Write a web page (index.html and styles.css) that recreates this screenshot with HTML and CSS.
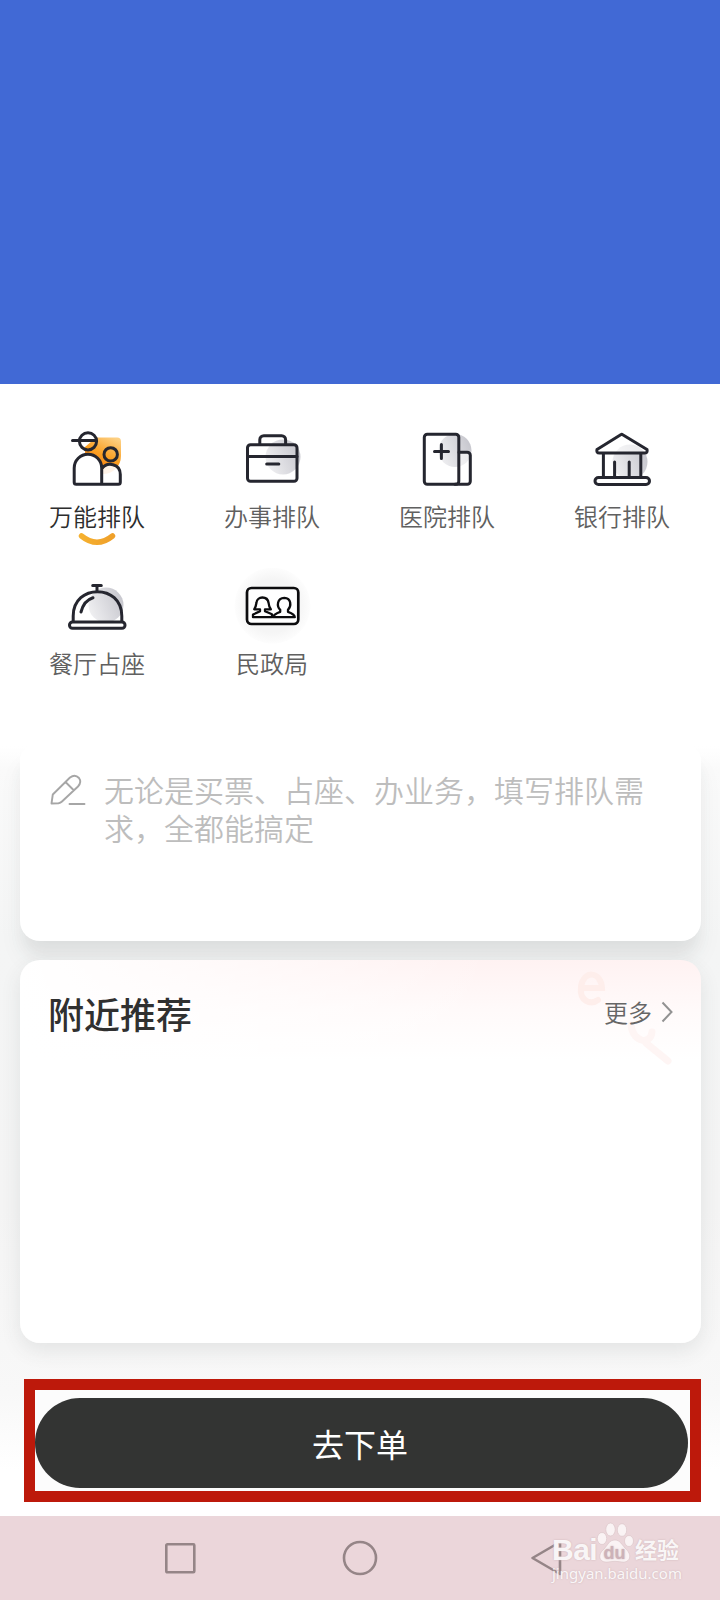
FILE: index.html
```html
<!DOCTYPE html>
<html lang="zh-CN">
<head>
<meta charset="utf-8">
<title>排队</title>
<link rel="stylesheet" href="styles.css">
</head>
<body>
<div class="screen">
  <div class="banner"></div>
  <nav class="services">
    <a class="service active">
      <svg class="icon" viewBox="57 421 80 76">
        <defs>
          <linearGradient id="orange" x1="0.8" y1="0" x2="0.3" y2="1"><stop offset="0" stop-color="#fdd083"/><stop offset="0.5" stop-color="#fa9f22"/><stop offset="1" stop-color="#f4700c"/></linearGradient>
          <linearGradient id="gray" x1="1" y1="0.3" x2="0" y2="0.7"><stop offset="0" stop-color="#c6c6cd"/><stop offset="1" stop-color="#f0f0f2"/></linearGradient>
          <linearGradient id="smile" x1="0" x2="1"><stop offset="0" stop-color="#f5b02f"/><stop offset="1" stop-color="#efa02a"/></linearGradient>
          <radialGradient id="glow"><stop offset="0.7" stop-color="#f5f5f5"/><stop offset="1" stop-color="#fdfdfd"/></radialGradient>
        </defs>
        <path d="M96 437.500H117a4 4 0 0 1 4 4V456a18 18 0 0 1-18 18A18 18 0 0 1 85 456V447Z" fill="url(#orange)"/>
        <path d="M75.700 484.300a1.500 1.500 0 0 1-1.500-1.500V468a13.700 13.700 0 0 1 27.500 0V484.300Z" fill="#fff"/>
        <path d="M102 484V473C103 462 120 461 120.300 474V484Z" fill="#fff" opacity="0.9"/>
        <g class="line"><circle cx="88" cy="441.300" r="8.600"/><path d="M72.500 440.600H96M102 484.200H76.200a2 2 0 0 1-2-2V468a13.700 13.700 0 0 1 27.500 0V484.200H118.300a2 2 0 0 0 2-2V474.500C120.300 463.500 107 461.500 102 468.500"/><circle cx="110.700" cy="454.400" r="6.700"/></g>
      </svg>
      <span class="label">万能排队</span>
      <svg class="smile" viewBox="0 0 40 16"><path d="M4.500 4Q20 16.500 35.500 4" fill="none" stroke="url(#smile)" stroke-width="5.500" stroke-linecap="round"/></svg>
    </a>
    <a class="service">
      <svg class="icon" viewBox="232 421 80 76">
        <circle cx="283" cy="457" r="17.500" fill="url(#gray)"/>
        <g class="line"><rect x="247.500" y="444.800" width="49.500" height="36.500" rx="3"/><path d="M247.500 456.400H297M259.800 444V439.700a4 4 0 0 1 4-4H281.600a4 4 0 0 1 4 4V444"/><path d="M266.700 464H278.800"/></g>
      </svg>
      <span class="label">办事排队</span>
    </a>
    <a class="service">
      <svg class="icon" viewBox="407 421 80 76">
        <circle cx="455" cy="450.500" r="16.500" fill="url(#gray)"/>
        <path d="M459 452.200H467.300a3 3 0 0 1 3 3V466L459 468Z" fill="#fff" opacity="0.6"/>
        <g class="line"><rect x="424.300" y="434.300" width="34.500" height="50" rx="3"/><path d="M459 452.200H467.300a3 3 0 0 1 3 3V481.300a3 3 0 0 1-3 3H455M434.500 451.500H448.500M441.400 444.500V458.500"/></g>
      </svg>
      <span class="label">医院排队</span>
    </a>
    <a class="service">
      <svg class="icon" viewBox="582 421 80 76">
        <circle cx="630" cy="462" r="17.500" fill="url(#gray)"/>
        <path d="M621.700 434.300L597 450Q596.500 453 600 453H644Q648 453 647.500 450Z" fill="#fff" opacity="0.6"/>
        <g class="line"><path d="M620.700 434.800Q621.700 434 622.700 434.800L647 449.500Q648 453 644.500 453H599.500Q596 453 597 449.500ZM603.400 453V477.500M640.800 453V477.500M614.600 462V477.500M629.200 462V477.500"/><rect x="595" y="477.500" width="54.500" height="7" rx="3.500" fill="#fff"/></g>
      </svg>
      <span class="label">银行排队</span>
    </a>
    <a class="service">
      <svg class="icon" viewBox="57 568 80 76">
        <circle cx="106" cy="605" r="17.500" fill="url(#gray)"/>
        <g class="line"><path d="M92.700 585.400H101.300M97 585.400V591.500M73.200 622V616C73.200 583.500 121.800 583.500 121.800 616V622M81 612Q84 600.500 93 597.800"/><rect x="69.500" y="622" width="55.500" height="6.300" rx="3" fill="#fff"/></g>
      </svg>
      <span class="label">餐厅占座</span>
    </a>
    <a class="service">
      <svg class="icon" viewBox="232 568 80 76">
        <circle cx="272.500" cy="605.700" r="38" fill="url(#glow)"/>
        <rect x="247" y="588" width="51.300" height="36" rx="4.500" fill="#fff" stroke="#0c0c0e" stroke-width="2.700"/>
        <g class="people"><path d="M253 617.200V614.500Q258 612.500 260 611.300V609.300H254.200Q256 606.500 256.500 602.500C257 596 267.500 595.500 268.600 603Q269 607 270.800 609.300H265V611.300Q267.500 612.500 272 614.300V617.200Z"/><path d="M273 617.200Q273.500 614.200 280.200 611.800V609.800C276.500 606 277 598 284.300 597.800C291.500 598 291.500 606 288 609.800V611.800Q294.800 614.200 294.800 617.200Z"/></g>
      </svg>
      <span class="label">民政局</span>
    </a>
  </nav>
  <main class="content">
    <section class="card request">
      <svg class="pencil" viewBox="49 772 38 36"><path d="M51.500 803.500L52.800 794.500L70 777.500Q75 773.800 79 778Q82 782 78 786.500L62 801.500Q60.500 803 58.500 803.200ZM65.500 782L73.500 790M69.500 804H84.500"/></svg>
      <p class="hint">无论是买票、占座、办业务，填写排队需求，全都能搞定</p>
    </section>
    <section class="card nearby">
      <svg class="deco" viewBox="0 0 140 110"><g fill="none" stroke-linecap="round"><path d="M22 28H41C40 11 23 10 20 26C18 42 30 45 37 40" stroke="#feeeeb" stroke-width="6"/><path d="M70 65C72 83 90 85 91 72M85 83L107 101" stroke="#fef5f4" stroke-width="7"/></g></svg>
      <h2 class="title">附近推荐</h2>
      <a class="more">更多<svg class="chevron" viewBox="0 0 12 22"><path d="M1.500 1.500L10.500 11L1.500 20.500"/></svg></a>
    </section>
    <div class="order"><button class="order-button">去下单</button></div>
  </main>
  <footer class="system">
    <svg class="key" viewBox="0 0 38 38"><rect x="5.300" y="5.300" width="28" height="28" rx="1"/></svg>
    <svg class="key home" viewBox="0 0 38 38"><circle cx="19" cy="19" r="16"/></svg>
    <svg class="key back" viewBox="0 0 38 38"><path d="M33 3V35L5.500 19Z"/></svg>
    <div class="watermark">
      <div class="brand"><span class="bai">Bai</span><svg class="paw" viewBox="0 0 38 41"><ellipse cx="6" cy="16.500" rx="4.700" ry="6"/><ellipse cx="14.500" cy="7.500" rx="4.700" ry="6.500"/><ellipse cx="26" cy="8" rx="4.700" ry="6.300"/><ellipse cx="33" cy="19" rx="4.500" ry="5.500"/><path d="M19 18C24 18 26 23 29 26C37 33 34 41 26 40Q19 38.500 12 40C3 41 1 33 8 27C12 23 13 18 19 18Z"/><text x="18.500" y="36.500" text-anchor="middle">du</text></svg><span class="jingyan">经验</span></div>
      <div class="domain">jingyan.baidu.com</div>
    </div>
  </footer>
</div>
</body>
</html>
```
FILE: styles.css
```css
* { box-sizing: border-box; }
body { margin: 0; background: #fff; font-family: "Noto Sans CJK SC", "Noto Sans", sans-serif; }
.screen { width: 720px; height: 1600px; display: flex; flex-direction: column; overflow: hidden; }
.banner { height: 384px; flex: none; background: #4169d5; }
.services { height: 362px; flex: none; display: grid; grid-template-columns: repeat(4, 175px); grid-auto-rows: 147px; padding: 37px 0 0 9.500px; background: #fff; }
.service { display: flex; flex-direction: column; align-items: center; color: #606060; }
.icon { width: 80px; height: 76px; display: block; flex: none; }
.line { fill: none; stroke: #25262f; stroke-width: 3; stroke-linecap: round; stroke-linejoin: round; }
.people { fill: none; stroke: #0c0c0e; stroke-width: 2.300; stroke-linejoin: round; }
.label { font-size: 24px; line-height: 36px; margin-top: 1px; font-weight: 350; }
.active .label { color: #2d2d2d; }
.smile { width: 40px; height: 16px; display: block; margin-top: -2px; }
.content { flex: 1; padding: 0 19px 0 20px; background: linear-gradient(#fff, #fafafa 3%, #f4f5f5 25%, #f4f4f4 60%, #f8f8f8 84%, #fff 94%); }
.card { background: #fff; box-shadow: 0 8px 20px rgba(60, 70, 70, 0.1); }
.request { height: 195px; border-radius: 14px 14px 20px 20px; padding: 24px 31px; display: flex; box-shadow: 0 16px 16px -4px rgba(60, 70, 70, 0.08), 0 20px 24px rgba(60, 70, 70, 0.05); }
.pencil { width: 38px; height: 36px; flex: none; margin: 2px 17px 0 -2px; fill: none; stroke: #a6a6a6; stroke-width: 1.900; stroke-linecap: round; stroke-linejoin: round; }
.hint { margin: 0; width: 545px; font-size: 30px; line-height: 38px; color: #bdbdbd; font-weight: 350; }
.nearby { position: relative; height: 383px; margin-top: 19px; border-radius: 20px; padding: 28px 28px; display: flex; justify-content: space-between; align-items: flex-start; background: linear-gradient(to right, #fff, rgba(255, 255, 255, 0) 70%), linear-gradient(#fff2f2, #fffafa 50px, #fff 100px); }
.deco { position: absolute; right: 0; top: 0; width: 140px; height: 110px; }
.title { position: relative; margin: 0; font-size: 36px; line-height: 50px; font-weight: 500; color: #303030; }
.more { position: relative; display: flex; align-items: center; gap: 9px; margin-top: 1px; font-size: 24px; line-height: 46px; color: #666; font-weight: 350; }
.chevron { width: 12px; height: 22px; fill: none; stroke: #929292; stroke-width: 2; }
.order { margin: 36px 0 0 4px; width: 677px; height: 123px; border: 11px solid #bd190b; background: #fcfcfc; padding: 8px 2px 3px 0; }
.order-button { display: block; width: 653px; height: 90px; border: 0; border-radius: 45px; padding: 0 3px 1px 0; background: #333433; color: #fff; font: 400 32px "Noto Sans CJK SC", sans-serif; }
.system { position: relative; flex: none; height: 84px; background: #ebd6da; display: flex; padding: 23px 0 0 161px; }
.key { width: 38px; height: 38px; fill: none; stroke: #958587; stroke-width: 2.600; stroke-linejoin: round; }
.home { margin-left: 142px; }
.back { margin-left: 148px; }
.watermark { position: absolute; left: 552px; top: 5px; color: rgba(255, 255, 255, 0.88); text-shadow: 0 0 2px #cbb2b6; white-space: nowrap; }
.brand { display: flex; align-items: flex-end; height: 42px; }
.bai { font: 700 30px/26px "Liberation Sans", sans-serif; width: 44px; letter-spacing: -0.500px; }
.paw { width: 38px; height: 41px; fill: #faf3f4; stroke: #d8c2c6; stroke-width: 0.600; }
.paw text { fill: #cdb2b8; stroke: none; font: 700 18px "Liberation Sans", sans-serif; }
.jingyan { font-size: 22px; line-height: 29px; font-weight: 700; margin-left: 1px; }
.domain { font: 400 15px/22px "Noto Sans", sans-serif; margin-top: -1px; }
```
